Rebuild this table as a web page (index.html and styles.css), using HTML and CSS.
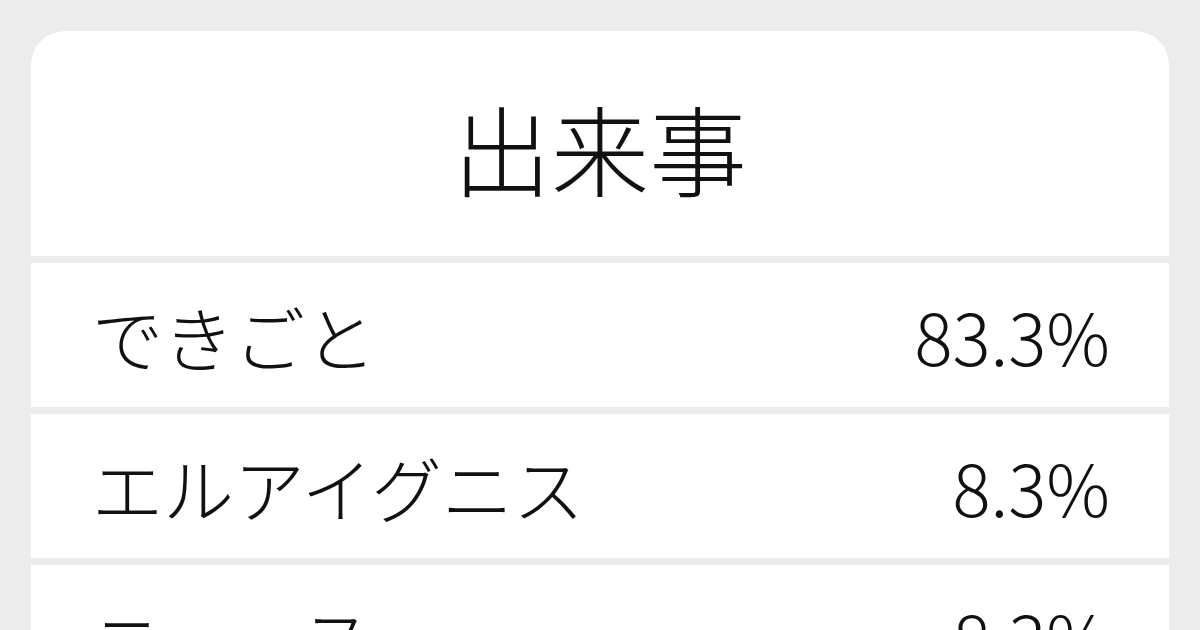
FILE: index.html
```html
<!DOCTYPE html>
<html lang="ja">
<head>
<meta charset="utf-8">
<link rel="stylesheet" href="styles.css">
</head>
<body>
<div class="card">
  <div class="head"><h1 class="title">出来事</h1></div>
  <div class="row"><span class="label">できごと</span><span class="pct">83.3%</span></div>
  <div class="row"><span class="label">エルアイグニス</span><span class="pct">8.3%</span></div>
  <div class="row"><span class="label">ニュース</span><span class="pct">8.3%</span></div>
</div>
</body>
</html>
```
FILE: styles.css
```css
html, body {
  margin: 0;
  padding: 0;
  background: #ececec;
  width: 1200px;
  height: 630px;
  overflow: hidden;
}
body {
  font-family: "Noto Sans CJK JP", "Noto Sans", sans-serif;
  font-weight: 300;
  color: #111;
  padding: 31px 31px 0 31px;
  box-sizing: border-box;
}
.card {
  border-radius: 34px;
  overflow: hidden;
  display: flex;
  flex-direction: column;
  gap: 7px;
}
.head {
  background: #fff;
  height: 225px;
  display: flex;
  align-items: center;
  justify-content: center;
}
.title {
  margin: 0;
  padding-top: 4px;
  font-size: 98px;
  font-weight: 300;
  line-height: 1;
}
.row {
  background: #fff;
  height: 144px;
  flex-shrink: 0;
  display: flex;
  align-items: center;
  justify-content: space-between;
  padding: 0 59px 0 61px;
  font-size: 71px;
  line-height: 1;
}
```
